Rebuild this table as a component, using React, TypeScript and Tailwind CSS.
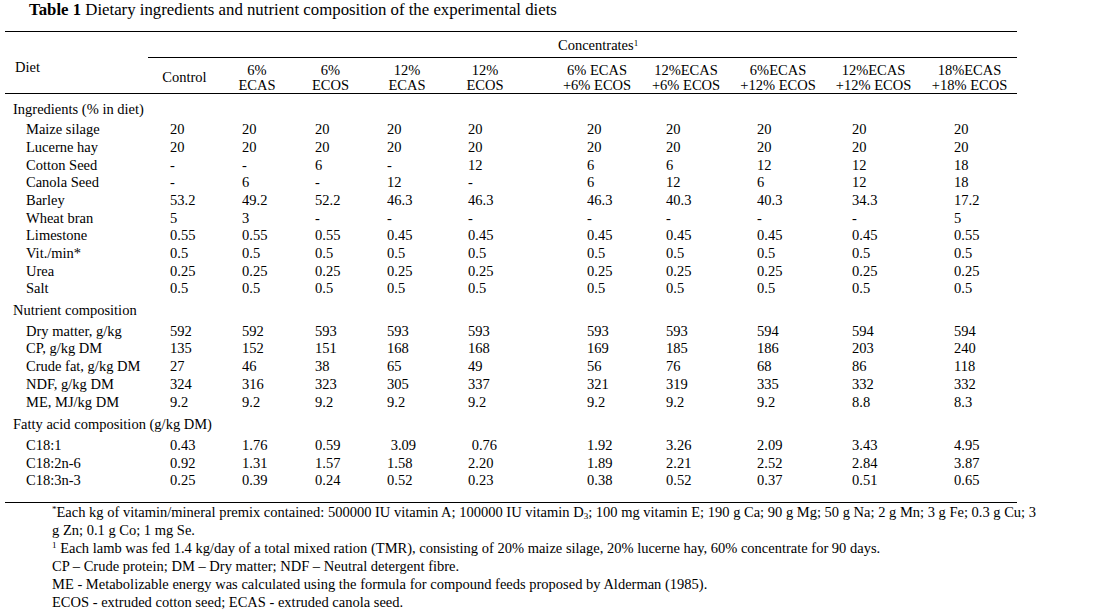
import React from "react";

const COLS = "grid grid-cols-[143px_73px_72px_75px_78px_95px_100px_90px_94px_97px_95px]";
const HCOLS = "grid grid-cols-[73px_72px_75px_78px_95px_100px_90px_94px_97px_95px]";

const DATA_PAD = [
  "pl-[22px]",
  "pl-[21px]",
  "pl-[22px]",
  "pl-[19px]",
  "pl-[22px]",
  "pl-[46px]",
  "pl-[25px]",
  "pl-[26px]",
  "pl-[27px]",
  "pl-[32px]",
];

const HEAD_PAD = ["", "", "", "", "pr-[17px]", "pl-[12px]", "", "", "", ""];

const headers: [string, string][] = [
  ["Control", ""],
  ["6%", "ECAS"],
  ["6%", "ECOS"],
  ["12%", "ECAS"],
  ["12%", "ECOS"],
  ["6% ECAS", "+6% ECOS"],
  ["12%ECAS", "+6% ECOS"],
  ["6%ECAS", "+12% ECOS"],
  ["12%ECAS", "+12% ECOS"],
  ["18%ECAS", "+18% ECOS"],
];

const N = "\u00a0";

type Section = { title: string; rows: [string, string[]][] };

const sections: Section[] = [
  {
    title: "Ingredients (% in diet)",
    rows: [
      ["Maize silage", ["20", "20", "20", "20", "20", "20", "20", "20", "20", "20"]],
      ["Lucerne hay", ["20", "20", "20", "20", "20", "20", "20", "20", "20", "20"]],
      ["Cotton Seed", ["-", "-", "6", "-", "12", "6", "6", "12", "12", "18"]],
      ["Canola Seed", ["-", "6", "-", "12", "-", "6", "12", "6", "12", "18"]],
      ["Barley", ["53.2", "49.2", "52.2", "46.3", "46.3", "46.3", "40.3", "40.3", "34.3", "17.2"]],
      ["Wheat bran", ["5", "3", "-", "-", "-", "-", "-", "-", "-", "5"]],
      ["Limestone", ["0.55", "0.55", "0.55", "0.45", "0.45", "0.45", "0.45", "0.45", "0.45", "0.55"]],
      ["Vit./min*", ["0.5", "0.5", "0.5", "0.5", "0.5", "0.5", "0.5", "0.5", "0.5", "0.5"]],
      ["Urea", ["0.25", "0.25", "0.25", "0.25", "0.25", "0.25", "0.25", "0.25", "0.25", "0.25"]],
      ["Salt", ["0.5", "0.5", "0.5", "0.5", "0.5", "0.5", "0.5", "0.5", "0.5", "0.5"]],
    ],
  },
  {
    title: "Nutrient composition",
    rows: [
      ["Dry matter, g/kg", ["592", "592", "593", "593", "593", "593", "593", "594", "594", "594"]],
      ["CP, g/kg DM", ["135", "152", "151", "168", "168", "169", "185", "186", "203", "240"]],
      ["Crude fat, g/kg DM", ["27", "46", "38", "65", "49", "56", "76", "68", "86", "118"]],
      ["NDF, g/kg DM", ["324", "316", "323", "305", "337", "321", "319", "335", "332", "332"]],
      ["ME, MJ/kg DM", ["9.2", "9.2", "9.2", "9.2", "9.2", "9.2", "9.2", "9.2", "8.8", "8.3"]],
    ],
  },
  {
    title: "Fatty acid composition (g/kg DM)",
    rows: [
      ["C18:1", ["0.43", "1.76", "0.59", N + "3.09", N + "0.76", "1.92", "3.26", "2.09", "3.43", "4.95"]],
      ["C18:2n-6", ["0.92", "1.31", "1.57", "1.58", "2.20", "1.89", "2.21", "2.52", "2.84", "3.87"]],
      ["C18:3n-3", ["0.25", "0.39", "0.24", "0.52", "0.23", "0.38", "0.52", "0.37", "0.51", "0.65"]],
    ],
  },
];

const SECTION_MT = ["", "mt-[4px]", "mt-[5px]"];

export default function App() {
  return (
    <div
      className="w-[1096px] h-[609px] overflow-hidden bg-white text-black"
      style={{ fontFamily: '"Liberation Serif", "Times New Roman", serif' }}
    >
      {/* Title */}
      <div className="pl-[29px] pt-[1px] h-[31px] text-[16.8px] leading-[18px] whitespace-nowrap">
        <span className="font-bold">Table 1</span> Dietary ingredients and nutrient composition of the experimental diets
      </div>

      {/* Table */}
      <div className="ml-[5px] w-[1012px] text-[14.5px]">
        {/* Header */}
        <div className="flex border-t border-b border-black">
          <div className="w-[143px] pl-[10px] pt-[27px] leading-[17px]">Diet</div>
          <div className="flex-1 flex flex-col">
            <div className="h-[26px] border-b border-black pl-[410px] pt-[2px] flex items-center leading-[17px]">
              <span>
                Concentrates<sup className="text-[9px]">1</sup>
              </span>
            </div>
            <div className={`${HCOLS} h-[35px] pt-[4px]`}>
              {headers.map(([a, b], i) => (
                <div
                  key={i}
                  className={`flex flex-col items-center justify-center leading-[15px] ${HEAD_PAD[i]}`}
                >
                  <span>{a}</span>
                  {b && <span>{b}</span>}
                </div>
              ))}
            </div>
          </div>
        </div>

        {/* Body */}
        <div className="border-b border-black pt-[6.5px] pb-[11.8px] leading-[17.7px]">
          {sections.map((s, si) => (
            <div key={si} className={SECTION_MT[si]}>
              <div className="h-[17.7px] mb-[3px] pl-[8px] whitespace-nowrap">{s.title}</div>
              {s.rows.map(([label, vals], ri) => (
                <div key={ri} className={`${COLS} h-[17.7px]`}>
                  <div className="pl-[21px] whitespace-nowrap">{label}</div>
                  {vals.map((v, vi) => (
                    <div key={vi} className={`whitespace-pre ${DATA_PAD[vi]}`}>
                      {v}
                    </div>
                  ))}
                </div>
              ))}
            </div>
          ))}
        </div>
      </div>

      {/* Footnotes */}
      <div className="pl-[52px] text-[14.5px] leading-[18px] whitespace-nowrap">
        <div>
          <sup className="text-[9px]">*</sup>Each kg of vitamin/mineral premix contained: 500000 IU vitamin A; 100000 IU vitamin D
          <sub className="text-[9px]">3</sub>; 100 mg vitamin E; 190 g Ca; 90 g Mg; 50 g Na; 2 g Mn; 3 g Fe; 0.3 g Cu; 3
        </div>
        <div>g Zn; 0.1 g Co; 1 mg Se.</div>
        <div>
          <sup className="text-[9px]">1</sup> Each lamb was fed 1.4 kg/day of a total mixed ration (TMR), consisting of 20% maize silage, 20% lucerne hay, 60% concentrate for 90 days.
        </div>
        <div>CP – Crude protein; DM – Dry matter; NDF – Neutral detergent fibre.</div>
        <div>ME - Metabolizable energy was calculated using the formula for compound feeds proposed by Alderman (1985).</div>
        <div>ECOS - extruded cotton seed; ECAS - extruded canola seed.</div>
      </div>
    </div>
  );
}
